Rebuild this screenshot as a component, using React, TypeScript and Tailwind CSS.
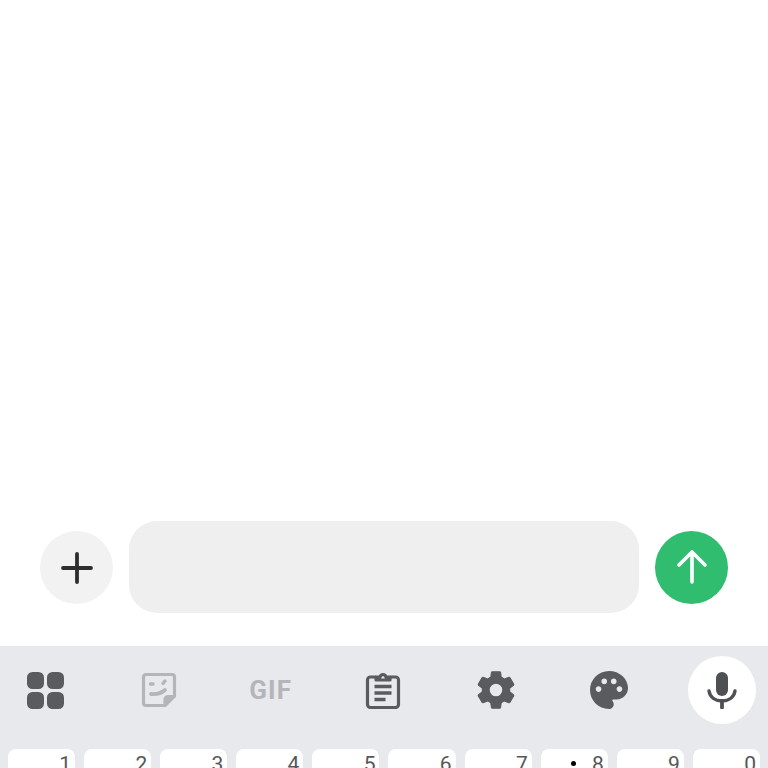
const keys = ['1', '2', '3', '4', '5', '6', '7', '8', '9', '0'];

function GridIcon() {
  return (
    <svg width="38" height="38" viewBox="0 0 38 38" fill="#5a5b5f">
      <rect x="1" y="1" width="17" height="17" rx="5.5" />
      <rect x="21" y="1" width="17" height="17" rx="5.5" />
      <rect x="1" y="21" width="17" height="17" rx="5.5" />
      <rect x="21" y="21" width="17" height="17" rx="5.5" />
    </svg>
  );
}

function StickerIcon() {
  return (
    <svg width="36" height="36" viewBox="0 0 36 36" fill="none" stroke="#b4b5b9" strokeWidth="3.200" strokeLinejoin="round" strokeLinecap="round">
      <path d="M5 2.500H31a2.500 2.500 0 0 1 2.500 2.500V24L24 33.500H5A2.500 2.500 0 0 1 2.500 31V5A2.500 2.500 0 0 1 5 2.500Z" />
      <path d="M33 24.500H27a3 3 0 0 0-3 3V33" fill="#b4b5b9" />
      <path d="M10 22c5 .5 10-.5 14-4" strokeWidth="3.800" />
      <path d="M9.500 12h2.500M24 9l-2 2.500" strokeWidth="3.400" />
    </svg>
  );
}

function ClipboardIcon() {
  return (
    <svg width="36" height="38" viewBox="0 0 36 38" fill="none" stroke="#5a5b5f" strokeWidth="3.200" strokeLinejoin="round">
      <path d="M11 6H5.500a3 3 0 0 0-3 3V33.500a3 3 0 0 0 3 3H30.500a3 3 0 0 0 3-3V9a3 3 0 0 0-3-3H25" />
      <path d="M11 9V6h4a3.100 3.100 0 0 1 6 0h4v3Z" />
      <path d="M9.500 15.500h17M9.500 22h17M9.500 28.500h11" strokeWidth="3.400" />
    </svg>
  );
}

function GearIcon() {
  return (
    <svg width="38" height="38" viewBox="2.500 2 19 20" fill="#5a5b5f" stroke="#5a5b5f" strokeWidth="0.6" strokeLinejoin="round">
      <path d="M19.14 12.94c.04-.3.06-.61.06-.94 0-.32-.02-.64-.07-.94l2.03-1.58c.18-.14.23-.41.12-.61l-1.92-3.32c-.12-.22-.37-.29-.59-.22l-2.39.96c-.5-.38-1.03-.7-1.62-.94l-.36-2.54c-.04-.24-.24-.41-.48-.41h-3.84c-.24 0-.43.17-.47.41l-.36 2.54c-.59.24-1.13.57-1.62.94l-2.39-.96c-.22-.08-.47 0-.59.22L2.74 8.87c-.12.21-.08.47.12.61l2.03 1.58c-.05.3-.09.63-.09.94s.02.64.07.94l-2.03 1.58c-.18.14-.23.41-.12.61l1.92 3.32c.12.22.37.29.59.22l2.39-.96c.5.38 1.03.7 1.62.94l.36 2.54c.05.24.24.41.48.41h3.84c.24 0 .44-.17.47-.41l.36-2.54c.59-.24 1.13-.56 1.62-.94l2.39.96c.22.08.47 0 .59-.22l1.92-3.32c.12-.22.07-.47-.12-.61l-2.01-1.58zM12 15.600c-1.98 0-3.6-1.62-3.6-3.6s1.62-3.6 3.6-3.6 3.6 1.62 3.6 3.6-1.62 3.6-3.6 3.6z" />
    </svg>
  );
}

function PaletteIcon() {
  return (
    <svg width="38" height="38" viewBox="2 2 20 20" fill="#5a5b5f">
      <path d="M12 2C6.49 2 2 6.49 2 12s4.49 10 10 10c1.38 0 2.5-1.12 2.5-2.5 0-.61-.23-1.2-.64-1.67-.08-.1-.13-.21-.13-.33 0-.28.22-.5.5-.5H16c3.31 0 6-2.69 6-6 0-4.96-4.49-9-10-9zm5.500 11c-.83 0-1.5-.67-1.5-1.5s.67-1.5 1.5-1.5 1.5.67 1.5 1.5-.67 1.5-1.5 1.5zm-3-4c-.83 0-1.5-.67-1.5-1.500S13.670 6 14.500 6s1.5.67 1.5 1.5S15.330 9 14.500 9zM5 11.500c0-.83.67-1.500 1.500-1.500s1.500.67 1.500 1.500S7.330 13 6.500 13 5 12.330 5 11.500zm6-4c0 .83-.67 1.500-1.500 1.500S8 8.330 8 7.500 8.670 6 9.500 6s1.500.67 1.500 1.500z" />
    </svg>
  );
}

function MicIcon() {
  return (
    <svg width="30" height="38" viewBox="0 0 30 38" fill="none">
      <rect x="9" y="1" width="12" height="24" rx="6" fill="#4f5054" />
      <path d="M2 20c1 6.500 6.500 10 13 10s12-3.500 13-10" stroke="#4f5054" strokeWidth="3.400" strokeLinecap="round" />
      <path d="M15 30v6.500" stroke="#4f5054" strokeWidth="3.800" strokeLinecap="round" />
    </svg>
  );
}

export default function App() {
  return (
    <div className="flex h-[768px] w-[768px] flex-col overflow-hidden bg-white font-['Roboto',sans-serif]">
      <div className="flex-1" />
      <div className="flex h-[92px] items-center gap-4 pl-10 pr-10">
        <button className="flex h-[73px] w-[73px] shrink-0 items-center justify-center rounded-full bg-[#f2f2f2] pt-px">
          <svg width="32" height="32" viewBox="0 0 32 32" fill="none" stroke="#2e2e2e" strokeWidth="3.800" strokeLinecap="round">
            <path d="M16 2v28M2 16h28" />
          </svg>
        </button>
        <div className="h-[92px] flex-1 rounded-[28px] bg-[#efeff0]" />
        <button className="flex h-[73px] w-[73px] shrink-0 items-center justify-center rounded-full bg-[#30bd6f]">
          <svg width="32" height="36" viewBox="0 0 32 36" fill="none" stroke="#ffffff" strokeWidth="3.600" strokeLinecap="round" strokeLinejoin="round">
            <path d="M16 33V3M3 16 16 3l13 13" />
          </svg>
        </button>
      </div>
      <div className="mt-[33px] h-[122px] shrink-0 bg-[#e8e9ed]">
        <div className="mb-4 flex h-[87px] items-center justify-between pl-[11px] pr-3 pt-px">
          <div className="flex h-[68px] w-[68px] items-center justify-center"><GridIcon /></div>
          <div className="flex h-[68px] w-[68px] items-center justify-center pl-0.5"><StickerIcon /></div>
          <div className="flex h-[68px] w-[68px] items-center justify-center text-[26px] font-bold tracking-[1px] text-[#b4b5b9]">GIF</div>
          <div className="flex h-[68px] w-[68px] items-center justify-center"><ClipboardIcon /></div>
          <div className="flex h-[68px] w-[68px] items-center justify-center"><GearIcon /></div>
          <div className="flex h-[68px] w-[68px] items-center justify-center"><PaletteIcon /></div>
          <div className="flex h-[68px] w-[68px] items-center justify-center rounded-full bg-white pl-px"><MicIcon /></div>
        </div>
        <div className="grid grid-cols-10 gap-[9px] pl-2 pr-2">
          {keys.map((k) => (
            <div key={k} className="relative h-10 rounded-lg bg-white pr-[4px] pt-[3px] text-right text-[21px] leading-6 text-[#55565a]">
              {k}
              {k === '8' && <span className="absolute left-[30px] top-[12px] h-[5px] w-[5px] rounded-full bg-black" />}
            </div>
          ))}
        </div>
      </div>
    </div>
  );
}
